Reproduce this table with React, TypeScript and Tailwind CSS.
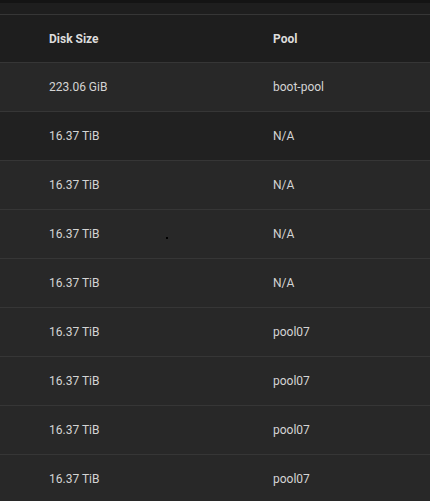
const ROWS = [
  { size: "223.06 GiB", pool: "boot-pool" },
  { size: "16.37 TiB", pool: "N/A", hover: true },
  { size: "16.37 TiB", pool: "N/A" },
  { size: "16.37 TiB", pool: "N/A", dot: true },
  { size: "16.37 TiB", pool: "N/A" },
  { size: "16.37 TiB", pool: "pool07" },
  { size: "16.37 TiB", pool: "pool07" },
  { size: "16.37 TiB", pool: "pool07" },
  { size: "16.37 TiB", pool: "pool07" },
];

export default function App() {
  return (
    <div className="w-[430px] h-[501px] overflow-hidden bg-[#282828] font-['Roboto',sans-serif] text-[12px]">
      <div className="h-[3px] bg-[#141414]" />
      <div className="h-[11px] bg-[#1e1e1e] border-b border-[#363636] box-content" />
      <div className="grid grid-cols-[273px_1fr] h-[47px] items-center bg-[#1e1e1e] border-b border-[#363636] box-content">
        <div className="pl-[49px] font-bold text-[#dcdcdc]">Disk Size</div>
        <div className="font-bold text-[#dcdcdc]">Pool</div>
      </div>
      {ROWS.map((r, i) => (
        <div
          key={i}
          className={
            "relative grid grid-cols-[273px_1fr] h-[48px] items-center border-b border-[#363636] box-content text-[#d4d4d4] " +
            (r.hover ? "bg-[#212121]" : "bg-[#282828]")
          }
        >
          <div className="pl-[49px]">{r.size}</div>
          <div>{r.pool}</div>
          {r.dot && <span className="absolute left-[166px] top-[27px] w-[2px] h-[2px] bg-black" />}
        </div>
      ))}
    </div>
  );
}
